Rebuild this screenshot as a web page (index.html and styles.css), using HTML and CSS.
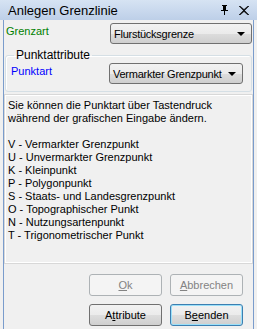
FILE: index.html
```html
<!DOCTYPE html>
<html lang="de">
<head>
    <meta charset="UTF-8">
    <title>Anlegen Grenzlinie</title>
    <link rel="stylesheet" href="styles.css">
</head>
<body>
    <div class="window">
        <div class="titlebar">
            <span class="title">Anlegen Grenzlinie</span>
            <span class="tools">
                <svg width="9" height="10" viewBox="0 0 9 10"><path d="M2 0h5v1H6v4h2v1H5v4H4V6H1V5h2V1H2z" fill="#000"/><path d="M5 1v4h1V1z" fill="#000"/></svg>
                <svg width="10" height="9" viewBox="0 0 10 9"><path d="M1 0l4 3.5L9 0h1L5.6 4.5 10 9H9L5 5.5 1 9H0l4.4-4.5L0 0z" fill="#000" stroke="#000" stroke-width="0.5"/></svg>
            </span>
        </div>
        <div class="content">
            <div class="row">
                <span class="label green">Grenzart</span>
                <div class="combo wide"><span class="value">Flurstücksgrenze</span><span class="arrow"></span></div>
            </div>
            <fieldset class="group">
                <legend>Punktattribute</legend>
                <div class="row inner">
                    <span class="label blue">Punktart</span>
                    <div class="combo"><span class="value">Vermarkter Grenzpunkt</span><span class="arrow"></span></div>
                </div>
            </fieldset>
            <div class="info">
                <p>Sie können die Punktart über Tastendruck<br>während der grafischen Eingabe ändern.</p>
                <p>V - Vermarkter Grenzpunkt<br>U - Unvermarkter Grenzpunkt<br>K - Kleinpunkt<br>P - Polygonpunkt<br>S - Staats- und Landesgrenzpunkt<br>O - Topographischer Punkt<br>N - Nutzungsartenpunkt<br>T - Trigonometrischer Punkt</p>
            </div>
            <div class="buttons">
                <button class="btn" disabled><u>O</u>k</button>
                <button class="btn" disabled><u>A</u>bbrechen</button>
                <button class="btn">A<u>t</u>tribute</button>
                <button class="btn default">B<u>e</u>enden</button>
            </div>
        </div>
    </div>
</body>
</html>
```

FILE: styles.css
```css
body {
    margin: 0;
    background: #f0f0f0;
    font-family: "Liberation Sans", Arial, sans-serif;
    font-size: 11px;
    color: #000;
}
.window {
    width: 257px;
    height: 329px;
    overflow: hidden;
}
.titlebar {
    height: 20px;
    background: linear-gradient(#d6e3f3, #bdcfe8);
    display: flex;
    align-items: center;
    justify-content: space-between;
    padding: 0 8px 0 8px;
}
.title {
    font-size: 13px;
    padding-top: 1px;
}
.tools {
    display: flex;
    gap: 10px;
    align-items: center;
}
.content {
    margin: 0 3px;
    border-left: 1px solid #7a9ccc;
    border-right: 1px solid #7a9ccc;
    height: 309px;
    padding: 0 1px;
}
.row {
    display: flex;
    justify-content: space-between;
    align-items: flex-start;
    padding-top: 3px;
}
.label {
    padding: 2px 0 0 1px;
}
.green { color: #008000; }
.blue { color: #0000ff; }
.combo {
    display: flex;
    justify-content: space-between;
    align-items: center;
    box-sizing: border-box;
    height: 21px;
    width: 134px;
    border: 1px solid #707070;
    border-radius: 3px;
    background: linear-gradient(#f2f2f2 0%, #ebebeb 50%, #dddddd 51%, #cfcfcf 100%);
    padding: 0 6px 0 3px;
    white-space: nowrap;
}
.combo .value {
    letter-spacing: -0.25px;
}
.combo.wide {
    width: 142px;
}
.arrow {
    flex: none;
    border-left: 4px solid transparent;
    border-right: 4px solid transparent;
    border-top: 4px solid #000;
}
.group {
    margin: 4px 0 0 0;
    padding: 0 8px 8px 4px;
    border: 1px solid #d5dfe5;
    border-radius: 3px;
    box-shadow: inset 1px 1px 0 #fff;
    height: 34px;
}
.group legend {
    padding: 0 2px;
    margin-left: 4px;
    font-size: 12px;
}
.row.inner {
    padding-top: 1px;
}
.info {
    margin-top: 3px;
    height: 168px;
    box-sizing: border-box;
    border: 1px solid #fff;
    outline: 1px solid #d8d8d8;
    padding: 3px 2px;
    line-height: 13px;
}
.info p {
    margin: 0 0 13px 0;
}
.buttons {
    display: grid;
    grid-template-columns: 73px 73px;
    gap: 8px 8px;
    justify-content: end;
    padding: 11px 9px 0 0;
}
.btn {
    height: 22px;
    font-family: inherit;
    font-size: 11px;
    border: 1px solid #707070;
    border-radius: 3px;
    background: linear-gradient(#f2f2f2 0%, #ebebeb 50%, #dddddd 51%, #cfcfcf 100%);
    color: #000;
    padding: 0;
}
.btn:disabled {
    background: #f4f4f4;
    border-color: #adb2b5;
    color: #838383;
}
.btn.default {
    border-color: #3c7fb1;
    box-shadow: inset 0 0 0 1px #9be0f9;
}
```
